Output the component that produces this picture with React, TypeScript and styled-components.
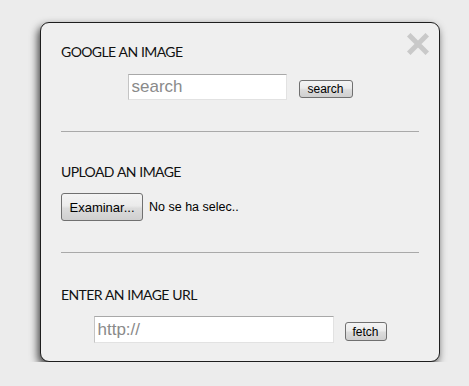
import React from 'react';
import styled, { createGlobalStyle } from 'styled-components';

const GlobalStyle = createGlobalStyle`
  html, body {
    margin: 0;
    padding: 0;
    background: #ececec;
  }
  body {
    font-family: "Liberation Sans", Arial, sans-serif;
  }
`;

const Page = styled.div`
  padding: 22px 0 0 40px;
`;

const Dialog = styled.div`
  position: relative;
  box-sizing: border-box;
  width: 400px;
  height: 340px;
  padding: 0 20px;
  background: #efefef;
  border: 1px solid #1e1e1e;
  border-radius: 9px;
  box-shadow: -2px 4px 9px rgba(0, 0, 0, 0.75);
  display: flex;
  flex-direction: column;
`;

const Close = styled.button`
  position: absolute;
  top: 10px;
  right: 10px;
  width: 22px;
  height: 22px;
  padding: 0;
  border: none;
  background: none;
  cursor: pointer;
`;

const Section = styled.section<{ $top: number }>`
  padding-top: ${(p) => p.$top}px;
`;

const Heading = styled.h2`
  margin: 0;
  font-family: Lato, "Open Sans", sans-serif;
  font-weight: 400;
  font-size: 14px;
  line-height: 16px;
  color: #111;
  letter-spacing: -0.6px;
  word-spacing: 0.5px;
`;

const Row = styled.div<{ $top: number; $gap: number; $center?: boolean }>`
  display: flex;
  align-items: flex-end;
  justify-content: ${(p) => (p.$center ? 'center' : 'flex-start')};
  gap: ${(p) => p.$gap}px;
  margin-top: ${(p) => p.$top}px;
`;

const TextInput = styled.input<{ $w: number; $h: number }>`
  box-sizing: border-box;
  width: ${(p) => p.$w}px;
  height: ${(p) => p.$h}px;
  padding: 0 3px;
  background: #fff;
  border: 1px solid #e2e2e2;
  border-top-color: #a8a8a8;
  border-left-color: #c4c4c4;
  font-family: "Liberation Sans", Arial, sans-serif;
  font-size: 17px;
  color: #333;
  outline: none;

  &::placeholder {
    color: #8a8a8a;
  }
`;

const Button = styled.button<{ $w: number; $h: number; $size: number }>`
  box-sizing: border-box;
  width: ${(p) => p.$w}px;
  height: ${(p) => p.$h}px;
  margin-bottom: ${(p) => (p.$h < 24 ? 2 : 0)}px;
  padding: 0;
  border: 1px solid #707070;
  border-radius: 3px;
  background: linear-gradient(#f4f4f4 0%, #ebebeb 45%, #dcdcdc 55%, #cfcfcf 100%);
  font-family: "Liberation Sans", Arial, sans-serif;
  font-size: ${(p) => p.$size}px;
  color: #000;
  cursor: pointer;
`;

const FileLabel = styled.span`
  font-family: "Liberation Sans", Arial, sans-serif;
  font-size: 12.5px;
  color: #000;
  line-height: 28px;
`;

const Divider = styled.hr<{ $top: number }>`
  margin: ${(p) => p.$top}px 0 0;
  border: none;
  border-top: 1px solid #a9a9a9;
  height: 0;
`;

const CloseIcon = () => (
  <svg width="22" height="22" viewBox="0 0 22 22">
    <path d="M3.5 3.5 L18.5 18.5 M18.5 3.5 L3.5 18.5" stroke="#c9c9c9" strokeWidth="5" strokeLinecap="square" />
  </svg>
);

export default function App() {
  return (
    <>
      <GlobalStyle />
      <Page>
        <Dialog>
          <Close aria-label="close">
            <CloseIcon />
          </Close>

          <Section $top={21}>
            <Heading>GOOGLE AN IMAGE</Heading>
            <Row $top={14} $gap={12} $center>
              <TextInput $w={159} $h={26} placeholder="search" />
              <Button $w={54} $h={18} $size={12}>search</Button>
            </Row>
          </Section>
          <Divider $top={31} />

          <Section $top={32}>
            <Heading>UPLOAD AN IMAGE</Heading>
            <Row $top={13} $gap={6}>
              <Button $w={82} $h={28} $size={13}>Examinar...</Button>
              <FileLabel>No se ha selec..</FileLabel>
            </Row>
          </Section>
          <Divider $top={31} />

          <Section $top={34}>
            <Heading>ENTER AN IMAGE URL</Heading>
            <Row $top={13} $gap={11} $center>
              <TextInput $w={240} $h={27} placeholder="http://" />
              <Button $w={42} $h={19} $size={12}>fetch</Button>
            </Row>
          </Section>
        </Dialog>
      </Page>
    </>
  );
}
